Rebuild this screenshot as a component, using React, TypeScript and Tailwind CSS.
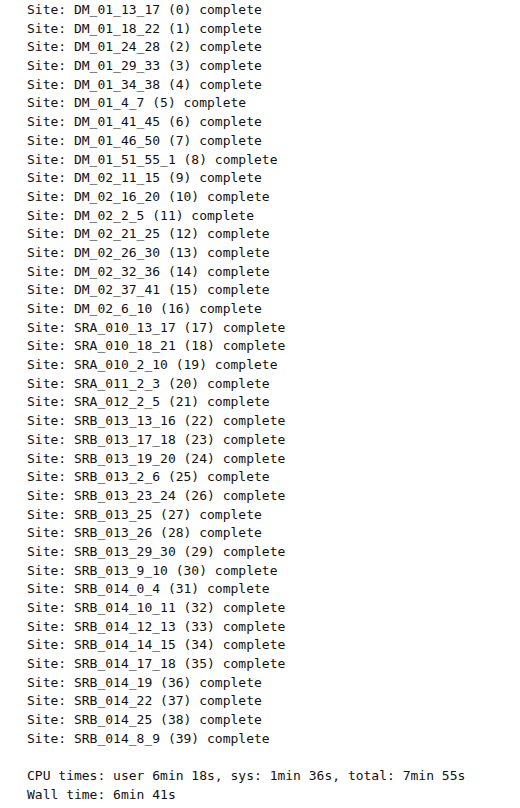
const lines = [
  "Site: DM_01_13_17 (0) complete",
  "Site: DM_01_18_22 (1) complete",
  "Site: DM_01_24_28 (2) complete",
  "Site: DM_01_29_33 (3) complete",
  "Site: DM_01_34_38 (4) complete",
  "Site: DM_01_4_7 (5) complete",
  "Site: DM_01_41_45 (6) complete",
  "Site: DM_01_46_50 (7) complete",
  "Site: DM_01_51_55_1 (8) complete",
  "Site: DM_02_11_15 (9) complete",
  "Site: DM_02_16_20 (10) complete",
  "Site: DM_02_2_5 (11) complete",
  "Site: DM_02_21_25 (12) complete",
  "Site: DM_02_26_30 (13) complete",
  "Site: DM_02_32_36 (14) complete",
  "Site: DM_02_37_41 (15) complete",
  "Site: DM_02_6_10 (16) complete",
  "Site: SRA_010_13_17 (17) complete",
  "Site: SRA_010_18_21 (18) complete",
  "Site: SRA_010_2_10 (19) complete",
  "Site: SRA_011_2_3 (20) complete",
  "Site: SRA_012_2_5 (21) complete",
  "Site: SRB_013_13_16 (22) complete",
  "Site: SRB_013_17_18 (23) complete",
  "Site: SRB_013_19_20 (24) complete",
  "Site: SRB_013_2_6 (25) complete",
  "Site: SRB_013_23_24 (26) complete",
  "Site: SRB_013_25 (27) complete",
  "Site: SRB_013_26 (28) complete",
  "Site: SRB_013_29_30 (29) complete",
  "Site: SRB_013_9_10 (30) complete",
  "Site: SRB_014_0_4 (31) complete",
  "Site: SRB_014_10_11 (32) complete",
  "Site: SRB_014_12_13 (33) complete",
  "Site: SRB_014_14_15 (34) complete",
  "Site: SRB_014_17_18 (35) complete",
  "Site: SRB_014_19 (36) complete",
  "Site: SRB_014_22 (37) complete",
  "Site: SRB_014_25 (38) complete",
  "Site: SRB_014_8_9 (39) complete",
  "",
  "CPU times: user 6min 18s, sys: 1min 36s, total: 7min 55s",
  "Wall time: 6min 41s",
];

export default function App() {
  return (
    <div className="w-[520px] h-[808px] bg-white overflow-hidden">
      <pre className="m-0 pl-[27px] pt-[1px] font-['DejaVu_Sans_Mono',monospace] text-[13px] leading-[18.69px] text-[#111]">
        {lines.join("\n")}
      </pre>
    </div>
  );
}
